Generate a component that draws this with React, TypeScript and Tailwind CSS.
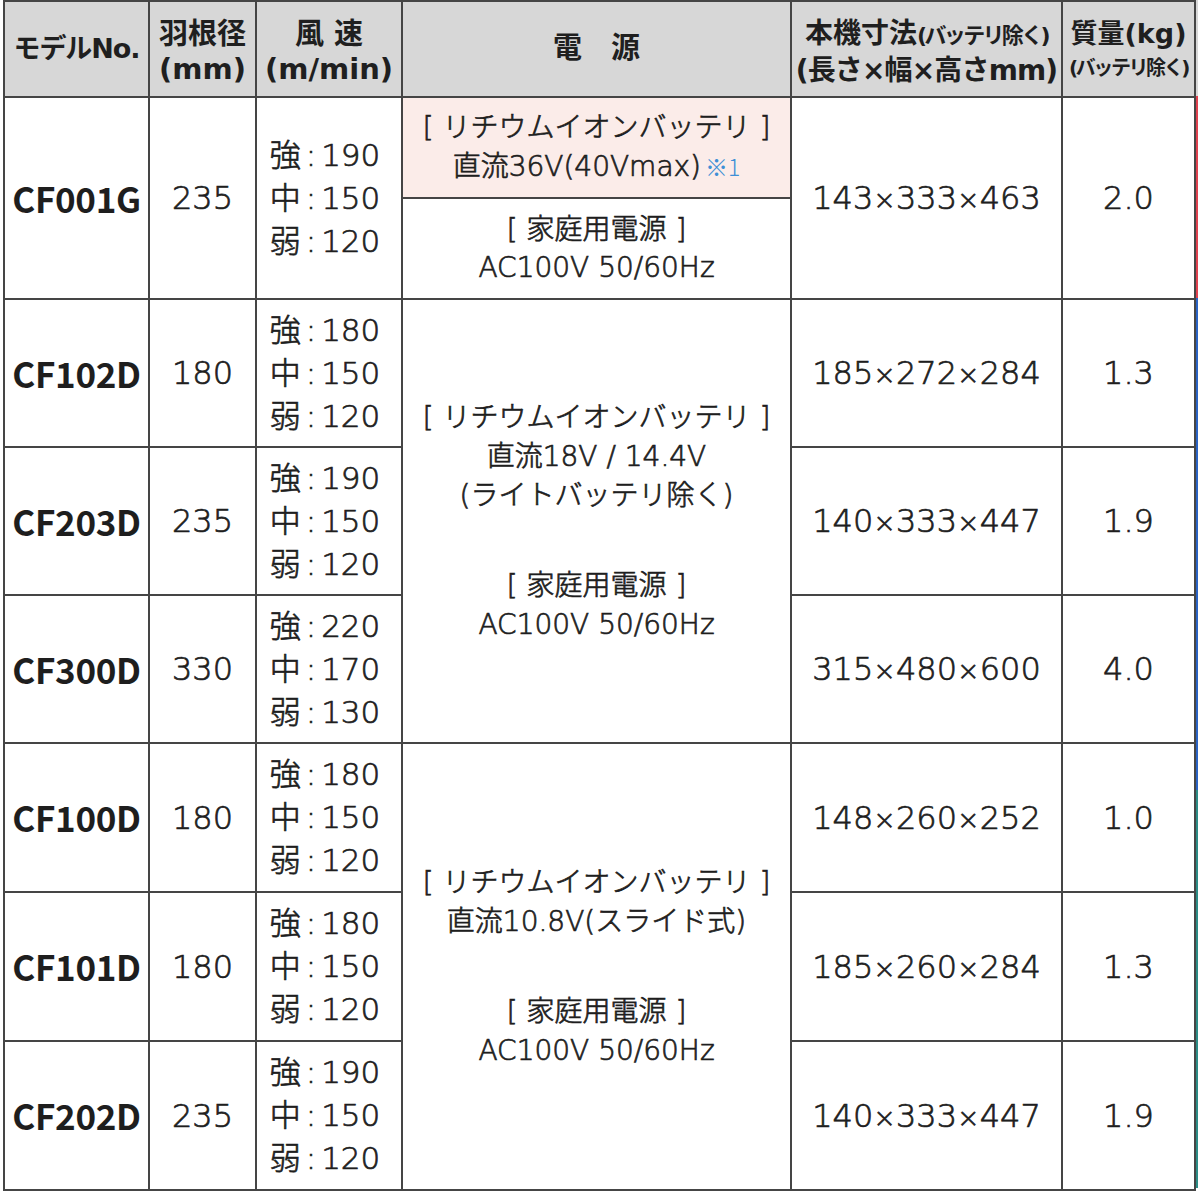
import React from 'react'

interface FanRow {
  model: string
  blade: string
  speed: [string, string, string]
  size: string
  weight: string
}

const rows: FanRow[] = [
  { model: 'CF001G', blade: '235', speed: ['190', '150', '120'], size: '143×333×463', weight: '2.0' },
  { model: 'CF102D', blade: '180', speed: ['180', '150', '120'], size: '185×272×284', weight: '1.3' },
  { model: 'CF203D', blade: '235', speed: ['190', '150', '120'], size: '140×333×447', weight: '1.9' },
  { model: 'CF300D', blade: '330', speed: ['220', '170', '130'], size: '315×480×600', weight: '4.0' },
  { model: 'CF100D', blade: '180', speed: ['180', '150', '120'], size: '148×260×252', weight: '1.0' },
  { model: 'CF101D', blade: '180', speed: ['180', '150', '120'], size: '185×260×284', weight: '1.3' },
  { model: 'CF202D', blade: '235', speed: ['190', '150', '120'], size: '140×333×447', weight: '1.9' },
]

const cell = 'border-2 border-[#454545] text-center align-middle p-0'
const modelCell = `${cell} text-[35px] font-bold tracking-[-0.01em] [-webkit-text-stroke:0px] font-['Noto_Sans_CJK_JP',sans-serif]`

// dimensions use a smaller multiplication sign, as in the printed table
function Size({ value }: { value: string }) {
  const parts = value.split('×')
  return (
    <span>
      {parts.map((p, i) => (
        <React.Fragment key={i}>
          {i > 0 && <span className="text-[27px]">×</span>}
          {p}
        </React.Fragment>
      ))}
    </span>
  )
}

function Speed({ values }: { values: [string, string, string] }) {
  const labels = ['強', '中', '弱']
  return (
    <div className="inline-flex flex-col items-start pr-[8px] text-[31px] leading-[43px]">
      {labels.map((l, i) => (
        <div key={l} className="flex items-center">
          <span>{l}</span>
          <span className="mx-[5px]">:</span>
          <span>{values[i]}</span>
        </div>
      ))}
    </div>
  )
}

function CommonCells({ row }: { row: FanRow }) {
  return (
    <>
      <td className={modelCell}>{row.model}</td>
      <td className={`${cell} text-[32px]`}>{row.blade}</td>
      <td className={cell}>
        <Speed values={row.speed} />
      </td>
    </>
  )
}

function TailCells({ row }: { row: FanRow }) {
  return (
    <>
      <td className={`${cell} text-[32px]`}>
        <Size value={row.size} />
      </td>
      <td className={`${cell} text-[32px]`}>{row.weight}</td>
    </>
  )
}

function PowerBlock({ voltage, extra }: { voltage: string; extra?: string }) {
  return (
    <div className="text-[28px] leading-[39px]">
      <div>[ リチウムイオンバッテリ ]</div>
      <div>{voltage}</div>
      {extra && <div>{extra}</div>}
      <div className="mt-[51px]">[ 家庭用電源 ]</div>
      <div>AC100V 50/60Hz</div>
    </div>
  )
}

export default function App() {
  const [first, ...rest] = rows
  const mid = rest.slice(0, 3)
  const last = rest.slice(3)

  return (
    <div className="min-h-[1193px] bg-white pl-[3px] font-light text-[#1e1e1e] [-webkit-text-stroke:0.7px_#1e1e1e] font-['DejaVu_Sans','Noto_Sans_CJK_JP',sans-serif]">
      <div className="flex">
        <table className="table-fixed border-collapse w-[1191px]">
          <colgroup>
            <col className="w-[145px]" />
            <col className="w-[107px]" />
            <col className="w-[146px]" />
            <col className="w-[389px]" />
            <col className="w-[271px]" />
            <col className="w-[133px]" />
          </colgroup>
          <thead>
            <tr className="h-[96px] bg-[#d7d7d7] font-bold text-[#1f1f1f] [-webkit-text-stroke:0px]">
              <th className={`${cell} text-[27px] tracking-[-0.04em]`}>モデルNo.</th>
              <th className={`${cell} pt-[6px] text-[29px] leading-[35px]`}>
                <div>羽根径</div>
                <div>(mm)</div>
              </th>
              <th className={`${cell} pt-[6px] text-[29px] leading-[35px]`}>
                <div>風 速</div>
                <div>(m/min)</div>
              </th>
              <th className={`${cell} text-[29px]`}>電　源</th>
              <th className={`${cell} pt-[6px] text-[28px] leading-[35px]`}>
                <div className="whitespace-nowrap">
                  本機寸法<span className="text-[22px] tracking-[-0.12em]">(バッテリ除く)</span>
                </div>
                <div className="whitespace-nowrap tracking-[-0.03em]">(長さ×幅×高さmm)</div>
              </th>
              <th className={`${cell} pt-[4px] leading-[34px]`}>
                <div className="text-[27px]">質量(kg)</div>
                <div className="text-[20px] tracking-[-0.12em]">(バッテリ除く)</div>
              </th>
            </tr>
          </thead>
          <tbody>
            <tr className="h-[101px]">
              <td rowSpan={2} className={modelCell}>{first.model}</td>
              <td rowSpan={2} className={`${cell} text-[32px]`}>{first.blade}</td>
              <td rowSpan={2} className={cell}>
                <Speed values={first.speed} />
              </td>
              <td className={`${cell} bg-[#fbece9] text-[28px] leading-[38px]`}>
                <div>[ リチウムイオンバッテリ ]</div>
                <div>
                  直流36V(40Vmax)
                  <span className="ml-[4px] text-[23px] text-[#3d8fd6] [-webkit-text-stroke:0px] font-['Noto_Sans_CJK_JP',sans-serif]">
                    ※1
                  </span>
                </div>
              </td>
              <td rowSpan={2} className={`${cell} text-[32px]`}>
                <Size value={first.size} />
              </td>
              <td rowSpan={2} className={`${cell} text-[32px]`}>{first.weight}</td>
            </tr>
            <tr className="h-[101px]">
              <td className={`${cell} text-[28px] leading-[38px]`}>
                <div>[ 家庭用電源 ]</div>
                <div>AC100V 50/60Hz</div>
              </td>
            </tr>
            {mid.map((row, i) => (
              <tr key={row.model} className="h-[148px]">
                <CommonCells row={row} />
                {i === 0 && (
                  <td rowSpan={3} className={cell}>
                    <PowerBlock voltage="直流18V / 14.4V" extra="(ライトバッテリ除く)" />
                  </td>
                )}
                <TailCells row={row} />
              </tr>
            ))}
            {last.map((row, i) => (
              <tr key={row.model} className="h-[149px]">
                <CommonCells row={row} />
                {i === 0 && (
                  <td rowSpan={3} className={cell}>
                    <PowerBlock voltage="直流10.8V(スライド式)" />
                  </td>
                )}
                <TailCells row={row} />
              </tr>
            ))}
          </tbody>
        </table>
        {/* page edge tab colours */}
        <div className="flex w-[4px] flex-col">
          <div className="h-[96px] bg-[#d7d7d7]" />
          <div className="h-[202px] bg-[#e0414f]" />
          <div className="h-[492px] bg-[#2a63c4]" />
          <div className="h-[398px] bg-[#2c8c86]" />
        </div>
      </div>
    </div>
  )
}
